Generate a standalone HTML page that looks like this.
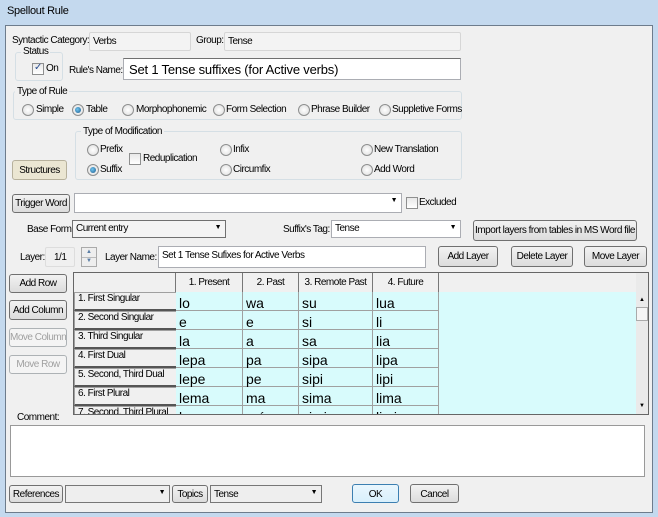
<!DOCTYPE html>
<html><head><meta charset="utf-8"><style>
*{box-sizing:border-box;margin:0;padding:0}
body{width:658px;height:517px;overflow:hidden;background:#c4d9ee;font-family:"Liberation Sans",sans-serif;font-size:10px;color:#000;position:relative;letter-spacing:-0.5px}
div{white-space:nowrap}
.a{position:absolute}
.dlg{position:absolute;left:5px;top:25px;width:648px;height:488px;background:#f0f0f0;border:1px solid #6d7c8c}
.ro{position:absolute;background:#f3f3f3;border:1px solid #d6d6d6;border-radius:2px;padding:3px 3px}
.inp{position:absolute;background:#fff;border:1px solid #abadb3;border-top-color:#707070}
.grp{position:absolute;border:1px solid #d5dfe5;border-radius:3px}
.lg{position:absolute;background:#f0f0f0;padding:0 2px}
.btn{position:absolute;border:1px solid #707070;border-radius:3px;background:linear-gradient(#f2f2f2,#dcdcdc);text-align:center;overflow:hidden}
.dis{color:#a0a0a0;border-color:#adb2b5;background:#f4f4f4}
.rad{position:absolute;width:12px;height:12px;border-radius:50%;border:1px solid #8e8f8f;background:radial-gradient(#fff,#dcdcdc)}
.rad.on::after{content:"";position:absolute;left:2px;top:2px;width:6px;height:6px;border-radius:50%;background:radial-gradient(circle at 40% 40%,#6fc5f0,#1d5a8c)}
.chk{position:absolute;width:12px;height:12px;border:1px solid #8e8f8f;background:linear-gradient(#e8e8e8,#fff)}
.cmb{position:absolute;background:#fff;border:1px solid #abadb3}
.cmb::after{content:"▼";position:absolute;right:4px;top:3px;font-size:7px}
.cell{position:absolute;border-right:1px solid #a0a0a0;border-bottom:1px solid #a0a0a0;font-size:14px;letter-spacing:0;padding-left:3px;padding-top:3px;background:#d8fbfc}
.rh{position:absolute;background:#f0f0f0;border:1px solid #a0a0a0;border-bottom:2px solid #555;padding-left:3px}
.ch{position:absolute;background:#f0f0f0;border-right:1px solid #777;text-align:center;top:0;height:19px;padding-top:4px}
</style></head><body>
<div class="a" style="left:7px;top:5px;font-size:11px;letter-spacing:-0.3px">Spellout Rule</div>
<div class="dlg"></div>

<div class="a" style="left:12px;top:35px">Syntactic Category:</div>
<div class="ro" style="left:89px;top:32px;width:102px;height:19px">Verbs</div>
<div class="a" style="left:196px;top:35px">Group:</div>
<div class="ro" style="left:224px;top:32px;width:237px;height:19px">Tense</div>

<div class="grp" style="left:15px;top:52px;width:48px;height:29px"></div>
<div class="lg" style="left:21px;top:46px">Status</div>
<div class="chk" style="left:32px;top:63px"><span style="position:absolute;left:1px;top:-2px;color:#2a4d8f;font-size:10px">✓</span></div>
<div class="a" style="left:46px;top:63px">On</div>
<div class="a" style="left:69px;top:65px">Rule's Name:</div>
<div class="inp" style="left:123px;top:58px;width:338px;height:22px;font-size:13px;letter-spacing:-0.2px;padding:3px 5px">Set 1 Tense suffixes (for Active verbs)</div>

<div class="grp" style="left:13px;top:91px;width:449px;height:29px"></div>
<div class="lg" style="left:15px;top:86px">Type of Rule</div>
<div class="rad" style="left:22px;top:104px"></div><div class="a" style="left:36px;top:104px">Simple</div>
<div class="rad on" style="left:72px;top:104px"></div><div class="a" style="left:86px;top:104px">Table</div>
<div class="rad" style="left:122px;top:104px"></div><div class="a" style="left:136px;top:104px">Morphophonemic</div>
<div class="rad" style="left:213px;top:104px"></div><div class="a" style="left:226px;top:104px">Form Selection</div>
<div class="rad" style="left:298px;top:104px"></div><div class="a" style="left:311px;top:104px">Phrase Builder</div>
<div class="rad" style="left:379px;top:104px"></div><div class="a" style="left:392px;top:104px">Suppletive Forms</div>

<div class="grp" style="left:75px;top:131px;width:387px;height:49px"></div>
<div class="lg" style="left:81px;top:126px">Type of Modification</div>
<div class="rad" style="left:87px;top:144px"></div><div class="a" style="left:100px;top:144px">Prefix</div>
<div class="rad on" style="left:87px;top:164px"></div><div class="a" style="left:100px;top:164px">Suffix</div>
<div class="chk" style="left:129px;top:153px"></div><div class="a" style="left:143px;top:153px">Reduplication</div>
<div class="rad" style="left:220px;top:144px"></div><div class="a" style="left:233px;top:144px">Infix</div>
<div class="rad" style="left:220px;top:164px"></div><div class="a" style="left:233px;top:164px">Circumfix</div>
<div class="rad" style="left:361px;top:144px"></div><div class="a" style="left:374px;top:144px">New Translation</div>
<div class="rad" style="left:361px;top:164px"></div><div class="a" style="left:374px;top:164px">Add Word</div>
<div class="btn" style="left:12px;top:160px;width:55px;height:20px;padding-top:4px;background:#ebe6d2;border-color:#b7b19c">Structures</div>

<div class="btn" style="left:12px;top:194px;width:58px;height:19px;padding-top:3px">Trigger Word</div>
<div class="cmb" style="left:74px;top:193px;width:328px;height:20px"></div>
<div class="chk" style="left:406px;top:197px"></div><div class="a" style="left:419px;top:197px">Excluded</div>

<div class="a" style="left:27px;top:224px">Base Form:</div>
<div class="cmb" style="left:72px;top:220px;width:154px;height:18px;background:#f4f4f4;border-color:#707070;padding:2px 3px">Current entry</div>
<div class="a" style="left:283px;top:224px">Suffix's Tag:</div>
<div class="cmb" style="left:331px;top:220px;width:130px;height:18px;padding:2px 3px">Tense</div>
<div class="btn" style="left:473px;top:220px;width:164px;height:21px;padding-top:4px">Import layers from tables in MS Word file</div>

<div class="a" style="left:20px;top:252px">Layer:</div>
<div class="ro" style="left:45px;top:247px;width:30px;height:20px;background:#f0f0f0;border-color:#ddd;padding:4px 0 0 8px">1/1</div>
<div class="a" style="left:81px;top:247px;width:16px;height:20px;border:1px solid #aaa;background:#eee"><div style="position:absolute;left:4px;top:1px;font-size:6px;color:#5a7da5">▲</div><div style="position:absolute;left:0;top:9px;width:14px;border-top:1px solid #bbb"></div><div style="position:absolute;left:4px;top:10px;font-size:6px;color:#5a7da5">▼</div></div>
<div class="a" style="left:105px;top:252px">Layer Name:</div>
<div class="inp" style="left:158px;top:246px;width:268px;height:22px;padding:3px 3px;border-color:#abadb3">Set 1 Tense Sufixes for Active Verbs</div>
<div class="btn" style="left:438px;top:246px;width:60px;height:21px;padding-top:4px">Add Layer</div>
<div class="btn" style="left:511px;top:246px;width:62px;height:21px;padding-top:4px">Delete Layer</div>
<div class="btn" style="left:584px;top:246px;width:63px;height:21px;padding-top:4px">Move Layer</div>

<div class="btn" style="left:9px;top:274px;width:58px;height:19px;padding-top:3px">Add Row</div>
<div class="btn" style="left:9px;top:300px;width:58px;height:20px;padding-top:4px">Add Column</div>
<div class="btn dis" style="left:9px;top:328px;width:58px;height:19px;padding-top:3px">Move Column</div>
<div class="btn dis" style="left:9px;top:355px;width:58px;height:19px;padding-top:3px">Move Row</div>

<div class="a" style="left:73px;top:272px;width:576px;height:143px;border:1px solid #666;background:#d8fbfc;overflow:hidden">
 <div class="a" style="left:0;top:0;width:563px;height:19px;background:#f0f0f0;border-bottom:1px solid #222"></div>
 <div class="ch" style="left:0;width:102px"></div>
 <div class="ch" style="left:102px;width:67px">1. Present</div>
 <div class="ch" style="left:169px;width:56px">2. Past</div>
 <div class="ch" style="left:225px;width:74px">3. Remote Past</div>
 <div class="ch" style="left:299px;width:66px">4. Future</div>
 <div class="ch" style="left:365px;width:198px;border-right:1px solid #222"></div>
 <div class="a" style="left:562px;top:0;width:12px;height:142px;background:#eaeaea"><div style="position:absolute;left:3px;top:24px;font-size:6px">▲</div><div style="position:absolute;left:0;top:34px;width:12px;height:14px;border:1px solid #aaa;background:#f5f5f5"></div><div style="position:absolute;left:3px;top:130px;font-size:6px">▼</div></div>
 <div class="rh" style="left:0;top:19px;width:103px;height:19px">1. First Singular</div>
 <div class="rh" style="left:0;top:38px;width:103px;height:19px">2. Second Singular</div>
 <div class="rh" style="left:0;top:57px;width:103px;height:19px">3. Third Singular</div>
 <div class="rh" style="left:0;top:76px;width:103px;height:19px">4. First Dual</div>
 <div class="rh" style="left:0;top:95px;width:103px;height:19px">5. Second, Third Dual</div>
 <div class="rh" style="left:0;top:114px;width:103px;height:19px">6. First Plural</div>
 <div class="rh" style="left:0;top:133px;width:103px;height:19px">7. Second, Third Plural</div>
 <div class="cell" style="left:102px;top:19px;width:67px;height:19px">lo</div><div class="cell" style="left:169px;top:19px;width:56px;height:19px">wa</div><div class="cell" style="left:225px;top:19px;width:74px;height:19px">su</div><div class="cell" style="left:299px;top:19px;width:66px;height:19px">lua</div>
 <div class="cell" style="left:102px;top:38px;width:67px;height:19px">e</div><div class="cell" style="left:169px;top:38px;width:56px;height:19px">e</div><div class="cell" style="left:225px;top:38px;width:74px;height:19px">si</div><div class="cell" style="left:299px;top:38px;width:66px;height:19px">li</div>
 <div class="cell" style="left:102px;top:57px;width:67px;height:19px">la</div><div class="cell" style="left:169px;top:57px;width:56px;height:19px">a</div><div class="cell" style="left:225px;top:57px;width:74px;height:19px">sa</div><div class="cell" style="left:299px;top:57px;width:66px;height:19px">lia</div>
 <div class="cell" style="left:102px;top:76px;width:67px;height:19px">lepa</div><div class="cell" style="left:169px;top:76px;width:56px;height:19px">pa</div><div class="cell" style="left:225px;top:76px;width:74px;height:19px">sipa</div><div class="cell" style="left:299px;top:76px;width:66px;height:19px">lipa</div>
 <div class="cell" style="left:102px;top:95px;width:67px;height:19px">lepe</div><div class="cell" style="left:169px;top:95px;width:56px;height:19px">pe</div><div class="cell" style="left:225px;top:95px;width:74px;height:19px">sipi</div><div class="cell" style="left:299px;top:95px;width:66px;height:19px">lipi</div>
 <div class="cell" style="left:102px;top:114px;width:67px;height:19px">lema</div><div class="cell" style="left:169px;top:114px;width:56px;height:19px">ma</div><div class="cell" style="left:225px;top:114px;width:74px;height:19px">sima</div><div class="cell" style="left:299px;top:114px;width:66px;height:19px">lima</div>
 <div class="cell" style="left:102px;top:133px;width:67px;height:19px">leme</div><div class="cell" style="left:169px;top:133px;width:56px;height:19px">mé</div><div class="cell" style="left:225px;top:133px;width:74px;height:19px">simi</div><div class="cell" style="left:299px;top:133px;width:66px;height:19px">limi</div>
</div>

<div class="a" style="left:17px;top:412px">Comment:</div>
<div class="inp" style="left:10px;top:425px;width:635px;height:52px;border-color:#999"></div>

<div class="btn" style="left:9px;top:485px;width:54px;height:18px;padding-top:3px">References</div>
<div class="cmb" style="left:65px;top:485px;width:105px;height:18px;background:#eee;border-color:#777"></div>
<div class="btn" style="left:172px;top:485px;width:36px;height:18px;padding-top:3px">Topics</div>
<div class="cmb" style="left:210px;top:485px;width:112px;height:18px;background:#eee;border-color:#777;padding:3px 3px">Tense</div>
<div class="btn" style="left:352px;top:484px;width:47px;height:19px;padding-top:4px;border-color:#3c7fb1;background:linear-gradient(#eaf6fd,#d9f0fc)">OK</div>
<div class="btn" style="left:410px;top:484px;width:49px;height:19px;padding-top:4px">Cancel</div>
</body></html>
